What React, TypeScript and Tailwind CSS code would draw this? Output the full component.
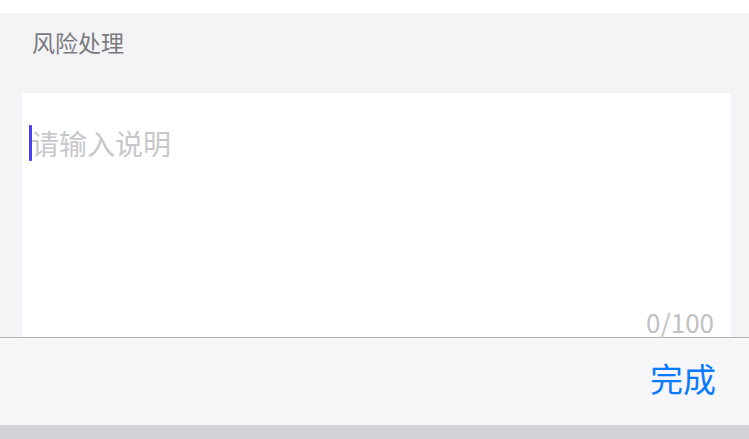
import React from "react";

export default function App() {
  const font = { fontFamily: '"Noto Sans CJK SC", "Noto Sans", sans-serif' };
  return (
    <div className="w-[749px] h-[439px] bg-white flex flex-col overflow-hidden" style={font}>
      <div className="h-[13px] bg-white" />
      <div className="bg-[#f4f4f6] flex flex-col">
        <div className="h-[80px] flex items-center pl-[32px] pb-[22px]">
          <span className="text-[23px] leading-none text-[#7a7a7e]">风险处理</span>
        </div>
        <div className="pl-[22px] pr-[18px]">
          <div className="bg-white h-[244px] relative flex flex-col">
            <div className="flex items-center pl-[7px] pt-[32px]">
              <div className="w-[3px] h-[36px] bg-[#4b3df2] rounded-[1px]" />
              <span className="text-[28px] leading-none text-[#c7c7cc] -ml-[1px]">请输入说明</span>
            </div>
            <div className="absolute right-[17px] bottom-[2px] text-[26px] leading-none text-[#c0c0c4]">0/100</div>
          </div>
        </div>
      </div>
      <div className="h-[1px] bg-[#b3b3b6]" />
      <div className="h-[87px] bg-[#f7f7f9] flex items-center justify-end pr-[33px] pb-[6px]">
        <span className="text-[33px] leading-none text-[#0a7aff]">完成</span>
      </div>
      <div className="flex-1 bg-[#d2d4da]" />
    </div>
  );
}
